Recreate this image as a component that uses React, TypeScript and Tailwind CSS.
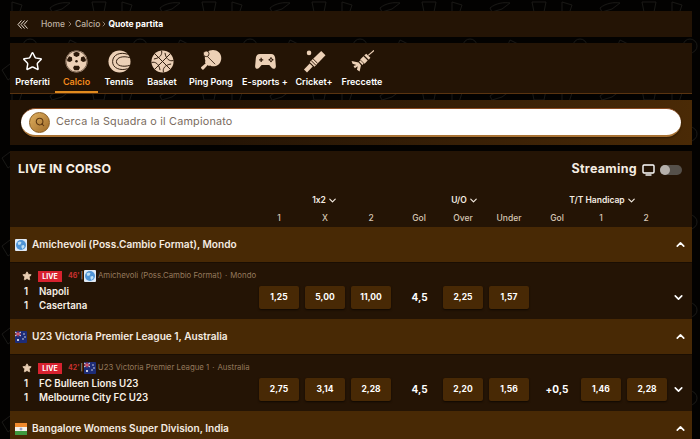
import React from "react";
import { ChevronDown, ChevronUp, ChevronRight, Star, Search } from "lucide-react";

const beige = "#ecd0b6";
const dark = "#2a1708";

const FootballIcon = () => (
  <svg width="23" height="23" viewBox="0 0 24 24">
    <circle cx="12" cy="12" r="11.500" fill={beige} />
    <circle cx="12" cy="12" r="11" fill="none" stroke={dark} strokeWidth="0.6" />
    <path d="M12 1.800l3.200 1.400-.4 2.800-2.800 1.200L9.200 6l-.4-2.800z" fill={dark} />
    <path d="M2.200 10l2-3.400 3 1 .4 3.400-2.400 1.400-2.800-.6z" fill={dark} />
    <path d="M21.800 10l-2-3.400-3 1-.4 3.400 2.400 1.400 2.800-.6z" fill={dark} />
    <path d="M8.400 18.600l1.200-2.200h4.800l1.200 2.200-1.400 2.600h-4.400z" fill={dark} />
    <circle cx="12" cy="11.800" r="1.300" fill={dark} />
  </svg>
);

const TennisIcon = () => (
  <svg width="23" height="23" viewBox="0 0 24 24">
    <circle cx="12" cy="12" r="11.500" fill={beige} />
    <path d="M20.500 4.500C13 1.800 5 4.600 4.800 12c-.2 7 8.200 10 15.700 7.500" fill="none" stroke={dark} strokeWidth="1" />
    <path d="M22.800 8C16 5.800 9 7.600 8.800 12c-.2 4.400 7 6.200 14 4" fill="none" stroke={dark} strokeWidth="1" />
  </svg>
);

const BasketIcon = () => (
  <svg width="23" height="23" viewBox="0 0 24 24">
    <circle cx="12" cy="12" r="11.500" fill={beige} />
    <g fill="none" stroke={dark} strokeWidth="1">
      <path d="M4 4l16 16M20 4L4 20" />
      <path d="M11 .8c1 3.500-1.200 7.600-8 8.600" />
      <path d="M21 14.600c-6.800 1-9 5-8 8.600" />
      <path d="M.8 13c3.500-1 7.600 1.200 8.600 8" />
      <path d="M14.600 3c1 6.800 5 9 8.600 8" />
    </g>
  </svg>
);

const PingPongIcon = () => (
  <svg width="24" height="24" viewBox="0 0 26 26">
    <path d="M9 3.500C12 .5 18 .2 21.500 3.600c3.600 3.600 3.400 9.400.3 12.600-2.600 2.600-6.600 3.400-9.800 1.700l-1.400.4-1.100-1.100-4 4.600c-.6.700-1 .7-1.600.6l-1.600-1.500c-.3-.8 0-1.100.5-1.600l4.500-3.800-.8-1 .4-1.700C5.800 10 6 6.400 9 3.500z" fill={beige} />
    <circle cx="7.800" cy="5.200" r="3.100" fill={beige} stroke={dark} strokeWidth="0.9" />
    <path d="M9 8l8.500 8.500" stroke={dark} strokeWidth="0.9" fill="none" />
  </svg>
);

const GamepadIcon = () => (
  <svg width="21" height="17" viewBox="0 0 22 18">
    <path d="M5 1h12c2.500 0 3.800 1.500 4.200 4l.8 9c.1 2.500-2.600 3.600-4.200 2l-2.800-3.400H6.900L4.100 16c-1.700 1.600-4.200.5-4.100-2l.8-9C1.200 2.500 2.500 1 5 1z" fill={beige} />
    <path d="M6.400 5v4.400M4.200 7.200h4.400" stroke={dark} strokeWidth="1.300" />
    <circle cx="16.800" cy="5.600" r="1" fill={dark} />
    <circle cx="16.800" cy="8.800" r="1" fill={dark} />
    <circle cx="15.200" cy="7.200" r="1" fill={dark} />
    <circle cx="18.400" cy="7.200" r="1" fill={dark} />
  </svg>
);

const CricketIcon = () => (
  <svg width="23" height="23" viewBox="0 0 24 24">
    <circle cx="6.300" cy="3" r="2.400" fill={beige} />
    <path d="M19 1l4.500 4.500L12 17.500 7 12.500z" fill={beige} />
    <path d="M7 14l3.200 3.200-6 6.300L1 20.300z" fill={beige} />
    <path d="M8.500 11l4.800 4.800M10.400 9.100l4.800 4.800" stroke={dark} strokeWidth="1" />
  </svg>
);

const DartIcon = () => (
  <svg width="23" height="23" viewBox="0 0 24 24">
    <path d="M24 .4l-6 5.200" stroke={beige} strokeWidth="1.200" />
    <path d="M16 3.800l4.200 4.200-1.600 2.200-4.800-4.800z" fill={beige} />
    <path d="M13 6.600l4.400 4.400-3.200 3.400-4.600-4.600z" fill={beige} />
    <path d="M9.800 10.800l3.400 3.400-1.200 1.400-3.600-3.600z" fill={beige} />
    <path d="M8 13L.6 11.400l1 3 4 1.200-3 1 1.400 2.400 3-2-.8 3.600 2.800 1.800L10.400 16z" fill={beige} />
  </svg>
);

const Tab = ({ label, active, icon, w }: { label: string; active?: boolean; icon: React.ReactNode; w: string }) => (
  <div className={`flex flex-col items-center shrink-0 h-full pt-[5px] ${w} ${active ? "border-b-2 border-[#e08a1e]" : ""}`}>
    <div className="h-[26px] flex items-center justify-center">{icon}</div>
    <span className={`mt-[2px] text-[9px] leading-[12px] font-semibold whitespace-nowrap ${active ? "text-[#f28a1c]" : "text-white"}`}>{label}</span>
  </div>
);

const Globe = () => (
  <svg width="12" height="12" viewBox="0 0 12 12" className="shrink-0">
    <rect width="12" height="12" rx="1" fill="#dfe9f5" />
    <circle cx="6" cy="6" r="5" fill="#4f94d6" />
    <path d="M2.500 3.500l2.500-1 1.500 1-1 2-2 .5zM6.500 6.500l2.500-.5 .5 2-2 2-1-1.500z" fill="#bfe0f5" />
  </svg>
);

const Australia = () => (
  <svg width="12" height="12" viewBox="0 0 12 12" className="shrink-0">
    <rect width="12" height="12" rx="1" fill="#1d2c78" />
    <path d="M0 1l6 4M6 1L0 5" stroke="#e8dfe5" strokeWidth="1" />
    <path d="M3 .5v5M0 3h6" stroke="#d13a4a" strokeWidth="1.200" />
    <circle cx="9" cy="3" r=".7" fill="#fff" />
    <circle cx="10" cy="6" r=".7" fill="#fff" />
    <circle cx="8" cy="8" r=".7" fill="#fff" />
    <circle cx="3" cy="9" r="1" fill="#fff" />
  </svg>
);

const India = () => (
  <svg width="12" height="12" viewBox="0 0 12 12" className="shrink-0">
    <rect width="12" height="4" fill="#f08a2c" />
    <rect y="4" width="12" height="4" fill="#f4f1ec" />
    <rect y="8" width="12" height="4" fill="#3f9a3e" />
    <circle cx="6" cy="6" r="1" fill="none" stroke="#2a3f8f" strokeWidth=".5" />
  </svg>
);

const LeagueRow = ({ flag, name }: { flag: React.ReactNode; name: string }) => (
  <div className="flex items-center h-[35px] bg-[#482905] px-[5px]">
    {flag}
    <span className="ml-[5px] text-[10.100px] font-semibold text-[#f5ece2] whitespace-nowrap">{name}</span>
    <ChevronUp className="ml-auto text-white" size={13} strokeWidth={3} />
  </div>
);

const Odd = ({ v }: { v: string }) => (
  <div className="w-[40px] h-[23px] rounded-[2px] bg-[#482905] shadow-[0_1px_2px_rgba(0,0,0,0.6)] flex items-center justify-center text-[8.5px] font-bold text-white">
    {v}
  </div>
);

const Line = ({ v, pl }: { v: string; pl: string }) => (
  <div className={`w-[52px] ${pl} text-center text-[10px] font-bold text-white`}>{v}</div>
);

const MatchRow = ({ flag, minute, league, country, t1, t2, odds, uo, ou, hc, hcodds }: {
  flag: React.ReactNode; minute: string; league: string; country: string; t1: string; t2: string;
  odds: string[]; uo: string; ou: string[]; hc?: string; hcodds?: string[];
}) => (
  <div className="flex items-center h-[57px] bg-[#241405] pl-[13px] pr-[7px] border-t border-[#1a0e03]">
    <div className="w-[236px] shrink-0">
      <div className="flex items-center h-[14px] relative">
        <Star size={10} className="text-[#e8cdb2] absolute -left-[1px]" fill="#e8cdb2" />
        <span className="ml-[15px] w-[24px] h-[11px] bg-[#d8222f] text-white text-[7px] font-bold flex items-center justify-center leading-none">LIVE</span>
        <span className="ml-[6px] text-[7px] font-bold text-[#c9312f]">{minute}</span>
        <span className="mx-[1px] text-[7px] text-[#e5d8ca]">|</span>
        {flag}
        <span className="ml-[2px] text-[7.800px] text-[#94795c] whitespace-nowrap">{league}</span>
        <span className="mx-[3px] text-[7.800px] text-[#94795c]">·</span>
        <span className="text-[7.800px] text-[#94795c] whitespace-nowrap">{country}</span>
      </div>
      <div className="flex mt-[2px] text-[9.700px] font-semibold leading-[14px] text-[#f8f0e6]">
        <span className="w-[16px] pl-[1px]">1</span><span>{t1}</span>
      </div>
      <div className="flex text-[9.700px] font-semibold leading-[14px] text-[#f8f0e6]">
        <span className="w-[16px] pl-[1px]">1</span><span>{t2}</span>
      </div>
    </div>
    <div className="flex flex-1 items-center mt-[13px]">
      <div className="flex gap-[6px]">{odds.map((o) => <Odd key={o} v={o} />)}</div>
      <Line v={uo} pl="pl-[5px]" />
      <div className="flex gap-[6px]">{ou.map((o) => <Odd key={o} v={o} />)}</div>
      {hc ? (
        <>
          <Line v={hc} pl="pl-[4px]" />
          <div className="flex gap-[6px]">{hcodds!.map((o) => <Odd key={o} v={o} />)}</div>
        </>
      ) : null}
      <ChevronDown className="ml-auto text-white" size={13} strokeWidth={3} />
    </div>
  </div>
);

const ColHead = ({ label, w }: { label: string; w: string }) => (
  <div className={`${w} text-center text-[8.5px] text-[#d8c8b6] font-medium shrink-0`}>{label}</div>
);

const GroupHead = ({ label, w }: { label: string; w: string }) => (
  <div className={`${w} flex items-center justify-center gap-[1px] text-[8.5px] font-semibold text-[#f5ece2] shrink-0`}>
    {label}
    <ChevronDown size={11} strokeWidth={2.5} />
  </div>
);

const Doodles = () => (
  <svg className="absolute inset-0" width="700" height="439">
    <defs>
      <pattern id="doodle" width="110" height="88" patternUnits="userSpaceOnUse">
        <g fill="none" stroke="#191815" strokeWidth="1">
          <path d="M12 2l10 3-3 9-7-1z" />
          <path d="M50 8c6-5 14-6 20-5l-8 6-10 3z" />
          <path d="M92 2h14l-2 10H94z" />
          <circle cx="30" cy="46" r="7" />
          <path d="M70 40l12 6-6 8-10-5z" />
          <path d="M2 70l8-6 6 10-8 6z" />
          <path d="M46 74h16l-3 8H50z" />
          <path d="M92 66c4 6 10 8 14 6" />
        </g>
      </pattern>
    </defs>
    <rect width="700" height="439" fill="url(#doodle)" />
  </svg>
);

export default function App() {
  return (
    <div
      className="relative w-[700px] h-[439px] overflow-hidden bg-[#030201] [font-feature-settings:'calt'_0]"
      style={{ fontFamily: "Inter, 'Open Sans', 'Liberation Sans', sans-serif" }}
    >
      <Doodles />
      <div className="relative h-full pl-[10px] pr-[8px] pt-[11px] flex flex-col gap-[6px]">
        <div className="h-[26px] shrink-0 bg-[#241405] flex items-center pl-[7px] text-[8.5px] font-medium text-[#bfb0a0]">
          <svg width="12" height="9" viewBox="0 0 12 9" fill="none" stroke="#e8dccf" strokeWidth="1">
            <path d="M4.500 .5L1 4.500l3.500 4M7.500 .5L4 4.500l3.500 4M10.500 .5L7 4.500l3.500 4" />
          </svg>
          <span className="ml-[12px]">Home</span>
          <ChevronRight size={8} className="mx-[1px]" />
          <span>Calcio</span>
          <ChevronRight size={8} />
          <span className="font-bold text-white">Quote partita</span>
        </div>

        <div className="h-[51px] shrink-0 bg-[#241405] flex border-b border-[#5a3410]">
          <Tab w="w-[45px]" label="Preferiti" icon={<Star size={21} className="text-white" strokeWidth={1.700} />} />
          <Tab w="w-[43px]" label="Calcio" active icon={<FootballIcon />} />
          <Tab w="w-[42px]" label="Tennis" icon={<TennisIcon />} />
          <Tab w="w-[44px]" label="Basket" icon={<BasketIcon />} />
          <Tab w="w-[54px]" label="Ping Pong" icon={<PingPongIcon />} />
          <Tab w="w-[54px]" label="E-sports +" icon={<GamepadIcon />} />
          <Tab w="w-[44px]" label="Cricket+" icon={<CricketIcon />} />
          <Tab w="w-[52px]" label="Freccette" icon={<DartIcon />} />
        </div>

        <div className="h-[45px] shrink-0 bg-gradient-to-r from-[#241405] from-30% to-[#4a2a06] flex items-center px-[11px]">
          <div className="w-[660px] h-[29px] rounded-full bg-white border-b-[2px] border-t border-b-[#a87234] border-t-[#8a4a20] flex items-center pl-[8px] shadow-[0_1px_2px_rgba(0,0,0,0.4)]">
            <div className="w-[21px] h-[21px] rounded-full bg-gradient-to-br from-[#e0b060] to-[#a06c28] border border-[#8a5c20] flex items-center justify-center">
              <Search size={10} strokeWidth={2.500} className="text-[#5a3510]" />
            </div>
            <span className="ml-[6px] pt-[1px] text-[10.800px] text-[#7a6c60] tracking-[0.2px]">Cerca la Squadra o il Campionato</span>
          </div>
        </div>

        <div className="flex-1 min-h-0 bg-[#241405] overflow-hidden">
          <div className="h-[37px] flex items-center pl-[8px] pr-[10px]">
            <span className="text-[12.400px] font-bold text-[#f8f0e6] tracking-[0.2px]">LIVE IN CORSO</span>
            <span className="ml-auto text-[12.500px] font-bold text-[#f5ece2] tracking-[0.3px]">Streaming</span>
            <svg width="13" height="12" viewBox="0 0 13 12" className="ml-[5px]">
              <rect x="1" y="1" width="11" height="8" rx="1" fill="none" stroke="#fff" strokeWidth="1.400" />
              <path d="M3.500 11h6" stroke="#fff" strokeWidth="1.400" />
            </svg>
            <div className="ml-[5px] w-[22px] h-[10px] rounded-full bg-[#55504a] flex items-center">
              <div className="w-[10px] h-[10px] rounded-full bg-[#b5b0ab]" />
            </div>
          </div>
          <div className="h-[24px] flex items-center">
            <div className="w-[249px] shrink-0" />
            <GroupHead label="1x2" w="w-[132px]" />
            <GroupHead label="U/O" w="w-[148px]" />
            <GroupHead label="T/T Handicap" w="w-[128px]" />
          </div>
          <div className="h-[13px] mb-[2px] flex items-center">
            <div className="w-[249px] shrink-0" />
            <ColHead label="1" w="w-[40px]" />
            <ColHead label="X" w="w-[52px]" />
            <ColHead label="2" w="w-[40px]" />
            <ColHead label="Gol" w="w-[56px]" />
            <ColHead label="Over" w="w-[32px]" />
            <ColHead label="Under" w="w-[60px]" />
            <ColHead label="Gol" w="w-[36px]" />
            <ColHead label="1" w="w-[52px]" />
            <ColHead label="2" w="w-[38px]" />
          </div>
          <LeagueRow flag={<Globe />} name="Amichevoli (Poss.Cambio Format), Mondo" />
          <MatchRow
            flag={<Globe />}
            minute="46'"
            league="Amichevoli (Poss.Cambio Format)"
            country="Mondo"
            t1="Napoli"
            t2="Casertana"
            odds={["1,25", "5,00", "11,00"]}
            uo="4,5"
            ou={["2,25", "1,57"]}
          />
          <LeagueRow flag={<Australia />} name="U23 Victoria Premier League 1, Australia" />
          <MatchRow
            flag={<Australia />}
            minute="42'"
            league="U23 Victoria Premier League 1"
            country="Australia"
            t1="FC Bulleen Lions U23"
            t2="Melbourne City FC U23"
            odds={["2,75", "3,14", "2,28"]}
            uo="4,5"
            ou={["2,20", "1,56"]}
            hc="+0,5"
            hcodds={["1,46", "2,28"]}
          />
          <LeagueRow flag={<India />} name="Bangalore Womens Super Division, India" />
        </div>
      </div>
    </div>
  );
}
